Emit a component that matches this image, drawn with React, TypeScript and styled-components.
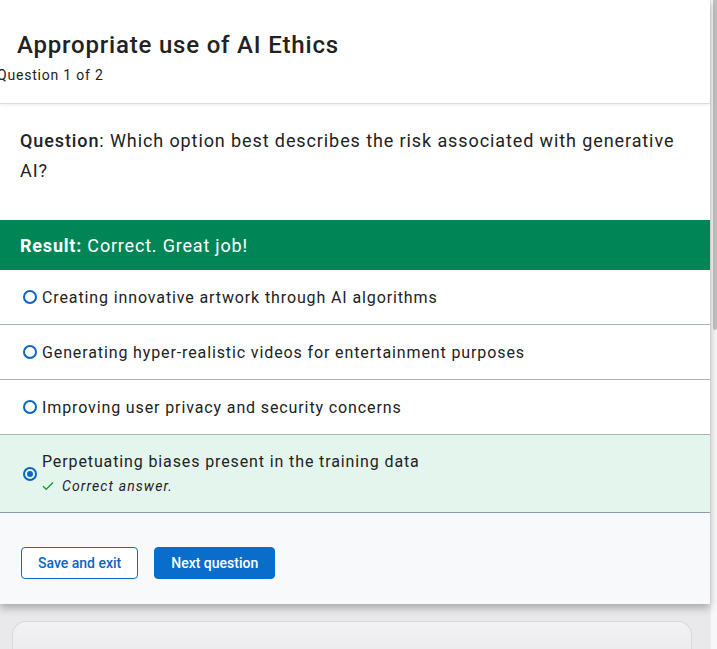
import React from "react";
import styled, { createGlobalStyle } from "styled-components";

const Global = createGlobalStyle`
  html, body { margin: 0; padding: 0; height: 100%; overflow: hidden; }
  body { font-family: Roboto, "Liberation Sans", Arial, sans-serif; color: #1f1f1f; background: #e4e4e6; }
  #root { height: 100%; }
`;

const Page = styled.div`
  display: flex;
  height: 649px;
  width: 717px;
  overflow: hidden;
`;

const Main = styled.div`
  width: 710px;
  display: flex;
  flex-direction: column;
  background: linear-gradient(#d7d7d9, #e9e9eb 40px);
`;

const Scrollbar = styled.div`
  width: 7px;
  background: #f7f7f7;
  border-left: 1px solid #ececec;
  box-sizing: border-box;
  padding-left: 2px;
`;

const Thumb = styled.div`
  width: 4px;
  height: 330px;
  background: #c1c1c1;
  border-radius: 0 0 2px 2px;
`;

const Card = styled.div`
  background: #fff;
  box-shadow: 0 4px 8px rgba(0, 0, 0, 0.28);
  position: relative;
  z-index: 1;
`;

const Header = styled.header`
  height: 104px;
  box-sizing: border-box;
  padding: 31px 0 0 17px;
  border-bottom: 1px solid #dcdcdc;
  box-shadow: 0 1px 3px rgba(0, 0, 0, 0.08);
`;

const Title = styled.h1`
  margin: 0;
  font-size: 24px;
  line-height: 28px;
  font-weight: 500;
  letter-spacing: 0.8px;
  color: #222;
`;

const Sub = styled.div`
  margin: 8px 0 0 -20px;
  font-size: 14px;
  line-height: 16px;
  letter-spacing: 0.8px;
  color: #222;
`;

const QuestionBox = styled.section`
  padding: 22px 30px 0 20px;
  height: 116px;
  box-sizing: border-box;
  font-size: 18px;
  line-height: 30px;
  letter-spacing: 0.9px;
  color: #222;
`;

const Strong = styled.b`
  font-weight: 500;
`;

const Banner = styled.div`
  height: 50px;
  background: #008656;
  color: #fff;
  font-size: 18px;
  letter-spacing: 0.8px;
  display: flex;
  align-items: center;
  padding-left: 20px;
`;

const Option = styled.div<{ $selected?: boolean }>`
  display: flex;
  align-items: center;
  gap: 5px;
  box-sizing: border-box;
  height: ${(p) => (p.$selected ? "78px" : "55px")};
  padding: 0 0 0 23px;
  background: ${(p) => (p.$selected ? "#e4f5ee" : "#fff")};
  border-bottom: 1px solid ${(p) => (p.$selected ? "#8f9bab" : "#aab3bf")};
  font-size: 16px;
  letter-spacing: 0.88px;
  color: #222;
`;

const Radio = styled.span<{ $checked?: boolean }>`
  width: 14px;
  height: 14px;
  box-sizing: border-box;
  border-radius: 50%;
  border: 2px solid #0a66c2;
  flex: none;
  display: flex;
  align-items: center;
  justify-content: center;
  &::after {
    content: "";
    display: ${(p) => (p.$checked ? "block" : "none")};
    width: 6px;
    height: 6px;
    border-radius: 50%;
    background: #0a66c2;
  }
`;

const OptionText = styled.div`
  display: flex;
  flex-direction: column;
  gap: 7px;
  margin-top: -1px;
`;

const Feedback = styled.div`
  display: flex;
  align-items: center;
  gap: 8px;
  font-size: 14px;
  font-style: italic;
  letter-spacing: 1.1px;
  color: #222;
`;

const Footer = styled.footer`
  height: 91px;
  background: #f8f9fb;
  display: flex;
  align-items: center;
  gap: 16px;
  padding-left: 21px;
  padding-top: 8px;
  box-sizing: border-box;
`;

const Button = styled.button<{ $primary?: boolean }>`
  height: 32px;
  box-sizing: border-box;
  padding: 0 16px;
  border-radius: 4px;
  font-family: Roboto, "Liberation Sans", Arial, sans-serif;
  font-size: 14px;
  font-weight: 500;
  border: 1px solid #0a6ccb;
  background: ${(p) => (p.$primary ? "#0a6ccb" : "#fff")};
  color: ${(p) => (p.$primary ? "#fff" : "#0a66c2")};
`;

const NextCard = styled.div`
  margin: 17px 18px 0 12px;
  height: 60px;
  border-radius: 14px 14px 0 0;
  background: linear-gradient(#f2f2f4, #ececee);
  border: 1px solid #d6d9e0;
  border-bottom: none;
`;

const options = [
  "Creating innovative artwork through AI algorithms",
  "Generating hyper-realistic videos for entertainment purposes",
  "Improving user privacy and security concerns",
];

export default function App() {
  return (
    <>
      <Global />
      <Page>
        <Main>
          <Card>
            <Header>
              <Title>Appropriate use of AI Ethics</Title>
              <Sub>Question 1 of 2</Sub>
            </Header>
            <QuestionBox>
              <Strong>Question</Strong>: Which option best describes the risk associated with generative AI?
            </QuestionBox>
            <Banner>
              <span>
                <b>Result:</b> Correct. Great job!
              </span>
            </Banner>
            {options.map((o) => (
              <Option key={o}>
                <Radio />
                <span>{o}</span>
              </Option>
            ))}
            <Option $selected>
              <Radio $checked />
              <OptionText>
                <span>Perpetuating biases present in the training data</span>
                <Feedback>
                  <svg width="12" height="10" viewBox="0 0 12 10" fill="none">
                    <path d="M1 5.2 L4.2 8.2 L11 1.5" stroke="#1a9a3c" strokeWidth="1.4" />
                  </svg>
                  Correct answer.
                </Feedback>
              </OptionText>
            </Option>
            <Footer>
              <Button>Save and exit</Button>
              <Button $primary>Next question</Button>
            </Footer>
          </Card>
          <NextCard />
        </Main>
        <Scrollbar>
          <Thumb />
        </Scrollbar>
      </Page>
    </>
  );
}
